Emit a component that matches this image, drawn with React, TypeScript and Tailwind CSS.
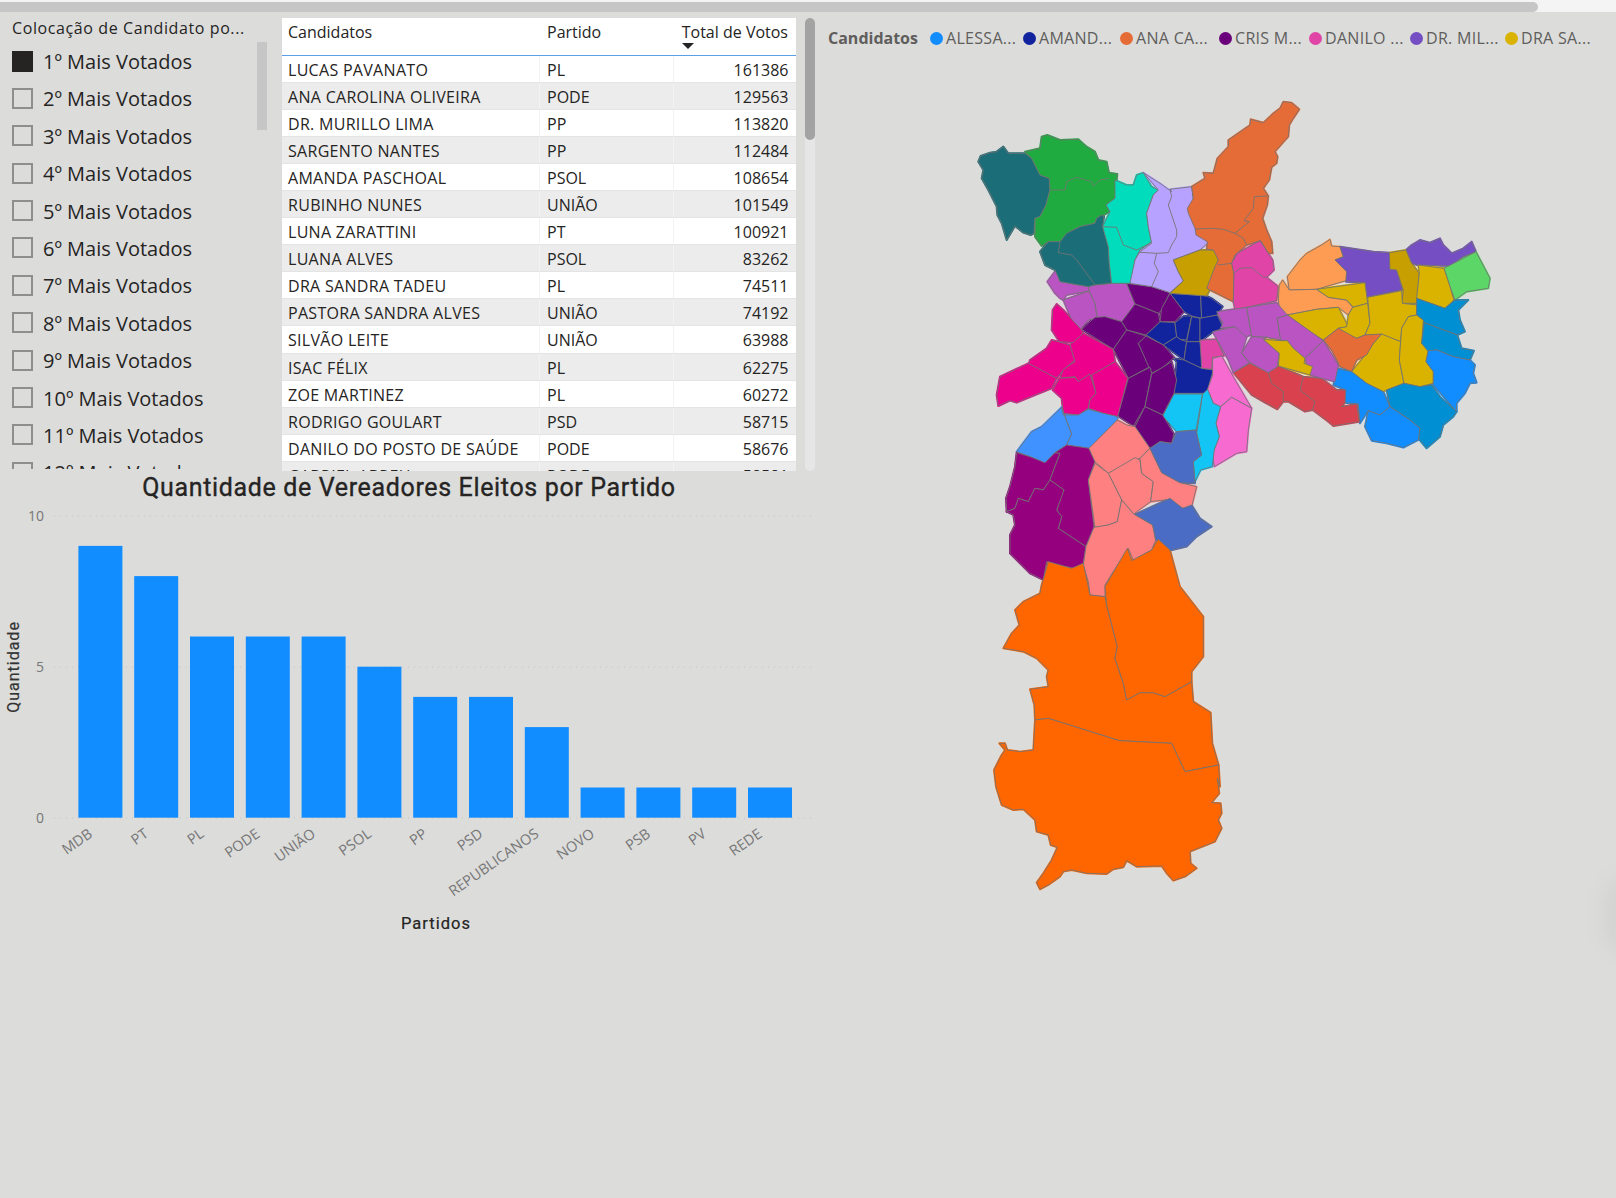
const slicerItems = [1, 2, 3, 4, 5, 6, 7, 8, 9, 10, 11, 12];

const rows = [
  ["LUCAS PAVANATO", "PL", "161386"],
  ["ANA CAROLINA OLIVEIRA", "PODE", "129563"],
  ["DR. MURILLO LIMA", "PP", "113820"],
  ["SARGENTO NANTES", "PP", "112484"],
  ["AMANDA PASCHOAL", "PSOL", "108654"],
  ["RUBINHO NUNES", "UNIÃO", "101549"],
  ["LUNA ZARATTINI", "PT", "100921"],
  ["LUANA ALVES", "PSOL", "83262"],
  ["DRA SANDRA TADEU", "PL", "74511"],
  ["PASTORA SANDRA ALVES", "UNIÃO", "74192"],
  ["SILVÃO LEITE", "UNIÃO", "63988"],
  ["ISAC FÉLIX", "PL", "62275"],
  ["ZOE MARTINEZ", "PL", "60272"],
  ["RODRIGO GOULART", "PSD", "58715"],
  ["DANILO DO POSTO DE SAÚDE", "PODE", "58676"],
  ["GABRIEL ABREU", "PODE", "58581"],
];

const legend = [
  { label: "ALESSA...", dot: "bg-[#118dff]", w: "w-[93px]" },
  { label: "AMAND...", dot: "bg-[#12239e]", w: "w-[97px]" },
  { label: "ANA CA...", dot: "bg-[#e66c37]", w: "w-[99px]" },
  { label: "CRIS M...", dot: "bg-[#6b007b]", w: "w-[90px]" },
  { label: "DANILO ...", dot: "bg-[#e044a7]", w: "w-[101px]" },
  { label: "DR. MIL...", dot: "bg-[#744ec2]", w: "w-[95px]" },
  { label: "DRA SA...", dot: "bg-[#d9b300]", w: "w-[90px]" },
];

const bars = [
  ["MDB", 9],
  ["PT", 8],
  ["PL", 6],
  ["PODE", 6],
  ["UNIÃO", 6],
  ["PSOL", 5],
  ["PP", 4],
  ["PSD", 4],
  ["REPUBLICANOS", 3],
  ["NOVO", 1],
  ["PSB", 1],
  ["PV", 1],
  ["REDE", 1],
] as const;

type Region = [string, string];

const teal = "#1b6e78";
const green = "#1fab40";
const turquoise = "#00dcbc";
const lavender = "#b8a2ff";
const darkMustard = "#c79f00";
const orange = "#e66c37";
const pink = "#e044a7";
const peach = "#fe9c53";
const violet = "#744ec2";
const lime = "#5bd667";
const mustard = "#d9b300";
const ocean = "#008fd3";
const blue = "#118dff";
const red = "#d9414f";
const mauve = "#bb54c3";
const navy = "#12239e";
const purple = "#6b007b";
const hotPink = "#f76bd0";
const cyan = "#12c5f4";
const magenta = "#ec008c";
const skyBlue = "#3f92ff";
const plum = "#95007f";
const salmon = "#ff8080";
const steel = "#4a6cc5";
const bigOrange = "#ff6600";

// north-west, traced from the crop starting at (960,90)
const northWest: Region[] = [
  [teal, "55,215 62,198 90,188 110,185 130,170 145,190 195,190 215,205 240,255 268,265 270,300 258,345 240,380 225,385 222,430 212,435 190,428 165,408 140,450 125,400 112,375 110,350 85,300 65,265 70,240"],
  [green, "195,185 240,175 245,140 262,135 300,150 355,148 380,170 405,185 415,210 440,215 447,248 472,252 465,325 438,345 450,365 432,375 410,385 405,400 360,410 330,425 320,435 300,455 265,455 245,468 225,440 225,385 240,380 258,345 270,300 268,265 240,255 215,205"],
  [teal, "240,485 265,455 300,455 320,430 330,425 360,410 405,400 410,385 425,375 432,380 428,410 445,470 448,520 455,580 405,585 385,590 300,575 285,540 255,525"],
  [turquoise, "465,270 500,285 520,285 530,255 550,248 575,290 595,300 580,315 560,370 565,410 575,455 540,480 525,510 515,580 455,580 448,520 445,470 428,410 450,365 438,345 465,325"],
  [lavender, "550,248 600,280 635,305 630,298 695,290 700,330 685,360 700,400 720,435 745,458 720,480 640,510 655,545 670,573 630,608 575,590 510,580 525,510 540,485 575,460 565,410 560,370 580,315 595,300"],
  [darkMustard, "640,510 720,480 765,480 775,510 760,580 740,618 630,610 670,573 655,545"],
];

const northWestLines = [
  "272,300 315,300 320,275 350,262 395,275 400,288 420,270 447,265",
  "300,455 295,488 335,495 350,510 405,585",
  "428,410 470,412 490,465 530,480 570,460",
  "630,298 635,320 625,345 650,420 650,440 635,465 625,488",
  "540,487 590,490 625,488",
  "590,490 583,520 595,545 575,590",
];

// north, traced from the crop starting at (1160,90)
const north: Region[] = [
  [orange, "370,35 395,38 418,58 400,85 388,105 385,140 345,185 353,200 350,220 335,232 328,270 310,295 325,318 322,345 308,385 320,420 335,455 338,490 325,490 302,452 260,465 225,495 215,520 222,550 220,635 200,625 140,595 165,530 175,510 160,480 140,478 142,455 108,435 105,415 85,370 82,355 100,325 95,290 135,265 130,248 160,250 172,205 205,170 205,150 270,105 272,88 310,98 340,70 360,55"],
  [pink, "215,520 232,490 300,452 338,510 342,540 320,562 355,590 350,632 260,652 225,658 220,635 222,550"],
];

const northLines = [
  "105,417 155,415 190,418 225,430 250,445 260,465",
  "225,430 268,395 252,392 280,355 283,320 322,318",
  "175,525 215,520",
  "222,550 240,535 275,533 310,562 320,562",
];

// east, traced from the crop starting at (1200,220)
const east: Region[] = [
  [peach, "262,170 300,120 320,100 365,75 390,58 395,78 420,80 430,110 405,120 440,155 438,182 350,208 268,210"],
  [peach, "235,240 238,195 248,180 268,210 350,208 385,232 440,240 458,262 445,285 415,262 350,268 262,285 240,280"],
  [violet, "420,80 520,95 568,98 590,150 608,210 500,232 495,188 438,185 440,155 405,120 430,110"],
  [violet, "618,90 635,75 660,60 690,68 720,55 730,75 755,100 790,85 815,65 828,95 790,110 750,138 650,135 635,130"],
  [darkMustard, "568,98 618,90 635,130 658,160 650,250 605,250 610,210 590,150 570,148"],
  [lime, "732,145 828,95 870,175 865,205 800,215 765,240 750,200"],
  [mustard, "655,135 732,145 750,200 762,240 735,265 650,235 658,160"],
  [mustard, "350,208 495,188 503,250 460,262 440,240 385,232"],
  [mustard, "262,285 350,268 415,262 445,320 415,325 370,360 330,335"],
  [mustard, "445,285 458,262 503,250 510,310 495,345 470,355 440,345 415,325 440,320"],
  [mustard, "503,232 605,212 607,250 650,255 650,285 625,290 605,325 602,365 545,345 495,345 510,310"],
  [mustard, "545,342 602,365 598,420 612,490 560,510 550,515 500,490 455,455 500,400 520,370"],
  [mustard, "605,325 625,290 650,285 670,300 665,370 685,390 678,425 700,455 700,490 660,500 612,490 598,420"],
  [orange, "370,360 415,325 470,355 495,345 545,342 520,370 500,405 470,420 455,455 420,440 395,390"],
  [ocean, "650,235 735,265 765,240 805,240 775,270 780,300 795,335 772,345 672,308 670,300 650,285"],
  [ocean, "672,308 772,345 785,385 822,392 810,420 760,410 710,390 685,395 665,370"],
  [blue, "685,392 710,390 760,410 810,420 825,435 820,460 830,488 810,490 795,520 770,550 770,575 700,495 700,455 678,425"],
  [ocean, "560,510 612,490 660,500 695,495 720,530 770,575 760,590 730,615 720,650 680,685 655,655 660,625 630,600 570,560"],
  [blue, "400,495 412,445 455,455 500,490 550,515 570,560 540,585 505,572 480,610 475,552 435,548 437,510"],
  [blue, "505,572 540,585 570,560 630,600 660,625 655,660 610,683 560,670 515,662 495,620"],
  [red, "100,458 150,430 205,458 235,438 310,470 365,475 410,510 437,510 435,548 425,560 470,552 478,605 400,618 385,605 338,570 315,575 265,545 250,545 232,568 195,548 155,525"],
  [mauve, "50,275 100,268 140,262 155,345 130,352 105,320 60,325 70,310"],
  [mauve, "140,262 230,248 262,285 232,295 242,360 200,352 155,350"],
  [mauve, "232,295 262,285 370,362 315,415 280,385 262,362 242,362"],
  [mauve, "370,362 415,435 405,485 365,475 330,465 315,415"],
  [mauve, "38,335 105,320 140,352 125,400 148,428 100,458 85,420"],
  [mauve, "155,350 200,352 190,358 238,400 232,440 205,458 150,428 125,400"],
  [mustard, "190,358 240,362 262,362 280,385 315,415 312,430 338,440 330,465 235,438 238,400"],
];

const eastLines = [
  "205,458 215,490 250,515 250,545",
  "310,470 300,510 345,545 338,570",
];

// centre and south-west, traced from the crop starting at (980,280)
const centre: Region[] = [
  [mauve, "202,5 228,-30 240,5 325,20 328,33 260,45 250,60 240,55 225,40"],
  [mauve, "250,60 328,33 345,70 352,115 325,120 302,148 275,120"],
  [mauve, "328,33 325,20 345,15 395,10 440,10 465,72 425,125 375,110 352,115 345,70"],
  [navy, "570,40 662,46 665,115 635,108 612,95"],
  [navy, "662,46 680,48 695,55 728,80 712,105 665,115"],
  [navy, "540,125 585,128 590,170 550,195 498,165"],
  [navy, "585,128 612,108 635,108 620,180 600,178 590,170"],
  [navy, "635,110 660,115 660,185 620,185"],
  [navy, "660,115 712,105 730,145 700,155 660,185"],
  [navy, "590,170 600,178 620,185 612,240 550,195"],
  [navy, "620,185 660,185 667,240 665,265 612,240"],
  [navy, "580,235 612,240 665,265 700,270 680,340 582,340 590,245"],
  [pink, "660,180 710,178 732,228 698,232 695,268 665,265"],
  [hotPink, "683,328 698,285 698,235 725,228 760,290 815,385 755,352 722,380 700,370"],
  [hotPink, "722,380 755,352 815,385 805,450 800,515 770,520 703,560 697,520 718,470 708,430"],
  [cyan, "548,408 582,342 668,342 648,450 590,455"],
  [cyan, "668,342 683,328 700,370 722,380 708,430 718,470 703,510 697,560 662,570 645,605 640,545 665,525 650,460"],
  [purple, "440,10 515,20 570,38 545,90 535,100 465,72"],
  [purple, "570,40 612,95 585,125 540,125 545,85"],
  [purple, "465,72 535,100 540,125 498,165 440,150 425,125"],
  [purple, "305,148 345,112 375,110 425,125 440,150 400,208"],
  [purple, "440,150 498,168 475,190 510,260 445,295 400,208"],
  [purple, "498,168 550,195 582,232 550,262 515,280 475,190"],
  [purple, "445,295 510,262 515,280 495,380 460,438 413,408"],
  [purple, "515,282 575,245 590,300 582,340 548,405 495,380"],
  [purple, "495,380 548,405 582,462 575,490 540,485 510,505 465,440"],
  [magenta, "230,72 250,90 305,150 310,165 285,188 238,185 215,150 218,90"],
  [magenta, "215,180 235,185 270,195 285,240 250,270 230,295 145,255 150,240 200,205"],
  [magenta, "270,195 310,160 400,208 405,245 340,285 295,305 285,290 240,295 250,268 285,245"],
  [magenta, "145,250 230,295 215,325 165,345 110,368 90,362 55,378 50,345 60,290"],
  [magenta, "218,330 238,295 285,292 295,305 330,282 348,340 330,360 325,385 295,405 250,400 245,355"],
  [magenta, "405,245 443,295 413,410 370,400 325,385 330,360 348,340 335,285"],
  [skyBlue, "110,515 155,455 185,440 245,382 275,462 260,495 225,518 195,550 150,530"],
  [skyBlue, "245,382 250,405 295,405 325,388 370,400 413,410 412,420 327,505 260,495 275,462"],
  [plum, "110,518 150,530 195,548 225,518 240,520 210,600 190,630 165,625 145,665 115,655 105,685 80,695 78,655 90,620 105,560"],
  [plum, "225,518 260,495 327,505 345,545 325,600 342,740 318,800 280,775 235,745 245,710 230,690 245,645 252,630 210,600 240,520"],
  [plum, "80,695 105,685 115,655 145,665 165,625 190,630 210,600 252,630 245,650 230,690 245,710 235,745 280,775 318,800 310,850 280,865 235,855 200,845 190,900 150,880 120,850 90,820 90,765 105,735 100,705"],
  [salmon, "412,420 440,435 465,440 510,505 480,535 385,580 345,545 327,505"],
  [salmon, "385,580 465,533 480,540 485,580 520,605 512,665 470,695 462,703 425,660"],
  [salmon, "480,535 510,505 545,578 600,608 650,620 635,680 608,685 570,658 512,665 520,605 485,580"],
  [salmon, "345,550 385,580 425,660 412,725 385,735 345,742 325,600"],
  [salmon, "342,742 385,735 412,725 425,660 462,703 518,735 527,780 515,810 460,840 445,805 400,875 375,915 375,950 330,945 325,905 310,855 318,800"],
  [steel, "510,505 540,485 575,490 590,455 648,450 665,525 640,545 645,610 600,608 545,578"],
  [steel, "465,703 570,655 608,685 635,675 660,715 695,740 650,770 620,800 570,812 527,780 518,735"],
];

// south, traced from the crop starting at (980,530)
const south: Region[] = [
  [bigOrange, "205,95 275,115 310,100 330,195 375,200 380,225 412,350 405,385 430,460 440,510 480,488 520,488 555,500 635,455 640,515 692,548 697,640 716,705 615,725 575,640 418,632 205,565 165,570 163,525 150,478 205,470 200,440 205,420 170,385 130,365 70,355 95,310 118,285 105,240 130,215 150,205 180,190 185,165"],
  [bigOrange, "380,225 375,170 442,55 455,92 515,60 535,28 570,60 600,170 670,260 670,380 635,425 635,455 555,500 520,488 480,488 440,510 430,460 405,385 412,350"],
  [bigOrange, "165,570 205,565 418,632 575,640 615,725 716,705 720,770 712,745 718,790 695,818 722,820 725,850 715,870 725,895 705,935 630,965 632,1000 650,1015 615,1040 580,1052 560,1030 545,1008 470,1010 440,992 430,1012 400,1018 380,1032 320,1030 275,1020 250,1025 240,1040 205,1065 180,1078 170,1058 190,1030 215,990 232,952 212,945 205,915 170,905 165,870 130,838 100,840 65,825 48,770 42,720 62,680 75,660 58,640 75,640 82,660 120,665 160,660"],
];

const mapLayers = [
  { x: 980, y: 280, regions: centre, lines: [] as string[] },
  { x: 980, y: 530, regions: south, lines: [] as string[] },
  { x: 960, y: 90, regions: northWest, lines: northWestLines },
  { x: 1160, y: 90, regions: north, lines: northLines },
  { x: 1200, y: 220, regions: east, lines: eastLines },
];

const MapSvg = () => (
  <svg width="560" height="810" viewBox="960 90 560 810" className="ml-[140px] block">
    {/* same colour underlay so the traced shapes have no slits between them */}
    {mapLayers.map((layer, l) => (
      <g key={l} transform={`translate(${layer.x} ${layer.y}) scale(0.3333)`} strokeWidth="6" strokeLinejoin="round">
        {layer.regions.map(([fill, points], i) => (
          <polygon key={i} points={points} fill={fill} stroke={fill} />
        ))}
      </g>
    ))}
    {mapLayers.map((layer, l) => (
      <g key={l} transform={`translate(${layer.x} ${layer.y}) scale(0.3333)`} stroke="#737373" strokeWidth="2.6" strokeLinejoin="round" fill="none">
        {layer.regions.map(([fill, points], i) => (
          <polygon key={i} points={points} fill={fill} />
        ))}
        {layer.lines.map((points, i) => (
          <polyline key={i} points={points} />
        ))}
      </g>
    ))}
  </svg>
);

const ChartSvg = () => (
  <svg width="820" height="470" viewBox="0 471 820 470" className="block font-['Open_Sans',sans-serif]">
    <text x="409" y="496" textAnchor="middle" fontSize="25" fill="#252423" stroke="#252423" strokeWidth="0.35" fontFamily="Roboto, sans-serif" letterSpacing="0.65">
      Quantidade de Vereadores Eleitos por Partido
    </text>
    {[
      [516, "10"],
      [667, "5"],
      [818, "0"],
    ].map(([y, label]) => (
      <g key={label}>
        <line x1="54" x2="814" y1={y} y2={y} stroke="#c4c4c4" strokeDasharray="1 5" />
        <text x="44" y={Number(y) + 5} textAnchor="end" fontSize="14" fill="#777777">
          {label}
        </text>
      </g>
    ))}
    <text transform="translate(19 667) rotate(-90)" textAnchor="middle" fontSize="16" fill="#333333" stroke="#333333" strokeWidth="0.2" fontFamily="Roboto, sans-serif" letterSpacing="1">
      Quantidade
    </text>
    {bars.map(([party, value], i) => {
      const x = 78.4 + i * 55.8;
      const h = value * 30.2;
      return (
        <g key={party}>
          <rect x={x} y={817.7 - h} width="44" height={h} fill="#118dff" />
          <text transform={`translate(${x + 15} 836) rotate(-35)`} textAnchor="end" fontSize="14.5" fill="#777777">
            {party}
          </text>
        </g>
      );
    })}
    <text x="436" y="929" textAnchor="middle" fontSize="16.5" fill="#252423" stroke="#252423" strokeWidth="0.2" fontFamily="Roboto, sans-serif" letterSpacing="1">
      Partidos
    </text>
  </svg>
);

const App = () => {
  return (
    <div className="relative h-[1198px] w-[1616px] overflow-hidden bg-[#dcdcdb] font-['Open_Sans',sans-serif]">
      {/* Page scrollbar */}
      <div className="h-3 bg-[#f4f4f4] pt-0.5">
        <div className="h-2.5 w-[1538px] rounded-r-md bg-[#c6c6c6]"></div>
      </div>

      <div className="flex">
        {/* Left side */}
        <div className="w-[820px] shrink-0">
          <div className="flex h-[459px] overflow-hidden">
            {/* Slicer */}
            <div className="relative h-[457px] w-[282px] shrink-0 overflow-hidden pl-3">
              <p className="mt-[6px] h-8 text-[16px] leading-5 font-medium tracking-[0.6px] whitespace-nowrap text-[#252423]">Colocação de Candidato po...</p>
              <div className="absolute top-[30px] left-[257px] h-[88px] w-2.5 bg-[#c6c6c6]"></div>
              <div className="flex flex-col">
                {slicerItems.map((n) => (
                  <div key={n} className="flex h-[37.4px] shrink-0 items-start gap-[10px]">
                    <span className={n === 1 ? "mt-[0.5px] h-[21px] w-[21px] bg-[#252423]" : "mt-[0.5px] h-[21px] w-[21px] border-2 border-[#8e8e8e]"}></span>
                    <span className="pt-[1px] text-[20px] leading-[21px] text-[#252423]">{n}º Mais Votados</span>
                  </div>
                ))}
              </div>
            </div>

            {/* Table */}
            <div className="mt-1.5 h-[453px] w-[514px] shrink-0 overflow-hidden bg-white text-[16px] text-[#252423]">
              <div className="flex h-[37.5px] border-b-[1.5px] border-[#5b9fe6] leading-5">
                <div className="w-[258px] px-1.5 pt-1">Candidatos</div>
                <div className="w-[134px] px-[7px] pt-1">Partido</div>
                <div className="w-[122px] pt-1 pr-2 text-right whitespace-nowrap">
                  Total de Votos
                  <div className="mt-[1px] ml-[8px] h-0 w-0 border-x-[6px] border-t-[6px] border-x-transparent border-t-[#252423]"></div>
                </div>
              </div>
              {rows.map((row, i) => (
                <div key={row[0]} className={i % 2 === 0 ? "flex h-[27.1px] border-b border-[#e4e4e4] bg-white leading-[24px]" : "flex h-[27.1px] border-b border-[#e4e4e4] bg-[#ececec] leading-[24px]"}>
                  <div className="w-[258px] border-r border-[#f3f3f3] px-1.5 pt-[2px] tracking-[0.3px] whitespace-nowrap">{row[0]}</div>
                  <div className="w-[134px] border-r border-[#f3f3f3] px-[7px] pt-[2px]">{row[1]}</div>
                  <div className="w-[122px] pt-[2px] pr-[7.5px] text-right">{row[2]}</div>
                </div>
              ))}
            </div>

            {/* Table scrollbar */}
            <div className="mt-1.5 ml-[9px] h-[453px] w-2.5 rounded-full bg-[#e6e6e6]">
              <div className="h-[122px] rounded-full bg-[#a3a3a3]"></div>
            </div>
          </div>

          <ChartSvg />
        </div>

        {/* Right side - legend and map */}
        <div className="flex-1">
          <div className="flex h-[78px] items-start pt-[17px] pl-2 text-[16px] leading-[18px] whitespace-nowrap text-[#605e5c]">
            <span className="w-[102px] font-bold">Candidatos</span>
            {legend.map((item) => (
              <div key={item.label} className={`flex items-center gap-[3px] tracking-[0.3px] ${item.w}`}>
                <span className={`h-[13px] w-[13px] shrink-0 rounded-full ${item.dot}`}></span>
                <span>{item.label}</span>
              </div>
            ))}
          </div>
          <MapSvg />
        </div>
      </div>

      {/* Faint shadow on the right edge */}
      <div className="absolute top-[880px] right-[-24px] h-[70px] w-[32px] rounded-full bg-black/5 blur-md"></div>
    </div>
  );
};

export default App;
